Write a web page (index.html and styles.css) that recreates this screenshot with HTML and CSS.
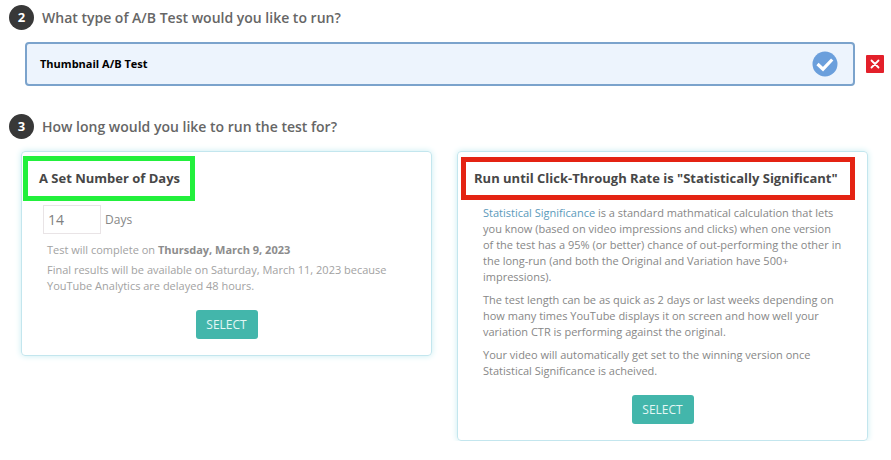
FILE: index.html
```html
<!DOCTYPE html>
<html lang="en">
<head>
<meta charset="utf-8">
<title>A/B Test Setup</title>
<link rel="stylesheet" href="styles.css">
</head>
<body>
<main>
  <section>
    <h2 class="step"><span class="num">2</span>What type of A/B Test would you like to run?</h2>
    <div class="type-row">
      <div class="type">
        <span>Thumbnail A/B Test</span>
        <svg class="check" viewBox="0 0 26 26" aria-hidden="true"><circle cx="13" cy="13" r="12.5" fill="#6b9fdc"/><path d="M5.500 13l5.500 5.200 9.200-9.700" fill="none" stroke="#fff" stroke-width="3.2"/></svg>
      </div>
      <button class="remove" type="button" aria-label="Remove">
        <svg viewBox="0 0 18 18" aria-hidden="true"><path d="M5.500 5.500l7 7M12.500 5.500l-7 7" stroke="#fff" stroke-width="1.8" stroke-linecap="round"/></svg>
      </button>
    </div>
  </section>
  <section>
    <h2 class="step"><span class="num">3</span>How long would you like to run the test for?</h2>
    <div class="cards">
      <article class="card">
        <h3 class="title green"><span>A Set Number of Days</span></h3>
        <div class="days">
          <input id="days" type="text" value="14">
          <label for="days">Days</label>
        </div>
        <div class="note">
          <p>Test will complete on <strong>Thursday, March 9, 2023</strong></p>
          <p>Final results will be available on Saturday, March 11, 2023 because YouTube Analytics are delayed 48 hours.</p>
        </div>
        <button class="select" type="button">SELECT</button>
      </article>
      <article class="card">
        <h3 class="title red"><span>Run until Click-Through Rate is "Statistically Significant"</span></h3>
        <div class="info">
          <p><a href="#">Statistical Significance</a> is a standard mathmatical calculation that lets you know (based on video impressions and clicks) when one version of the test has a 95% (or better) chance of out-performing the other in the long-run (and both the Original and Variation have 500+ impressions).</p>
          <p>The test length can be as quick as 2 days or last weeks depending on how many times YouTube displays it on screen and how well your variation CTR is performing against the original.</p>
          <p>Your video will automatically get set to the winning version once Statistical Significance is acheived.</p>
        </div>
        <button class="select" type="button">SELECT</button>
      </article>
    </div>
  </section>
</main>
</body>
</html>
```
FILE: styles.css
```css
* { box-sizing: border-box; }
body {
  margin: 0;
  background: #fff;
  color: #878787;
  font: 12px/16px "Open Sans", "Noto Sans", sans-serif;
}
h2, h3, p { margin: 0; }
main {
  display: grid;
  gap: 28px;
  padding: 5px 7px 0 9px;
}
.step {
  display: flex;
  align-items: center;
  gap: 8px;
  color: #666;
  font-size: 14px;
  line-height: 20px;
  font-weight: 600;
}
.num {
  width: 25px;
  height: 25px;
  border-radius: 50%;
  background: #383838;
  color: #fff;
  font-size: 13px;
  line-height: 25px;
  font-weight: 700;
  text-align: center;
}
.type-row {
  display: flex;
  align-items: center;
  gap: 11px;
  margin: 12px 0 0 16px;
}
.type {
  flex: 1;
  display: flex;
  align-items: center;
  justify-content: space-between;
  height: 44px;
  padding: 0 15px 0 13px;
  border: 2px solid #7ba3cc;
  border-radius: 4px;
  background: #edf4fd;
  color: #000;
  font-size: 11px;
  font-weight: 700;
}
.check { width: 26px; height: 26px; }
.remove {
  width: 18px;
  height: 18px;
  padding: 0;
  border: 0;
  border-radius: 1px;
  background: #e3202a;
}
.remove svg { display: block; }
.cards {
  display: grid;
  grid-template-columns: 1fr 1fr;
  align-items: start;
  gap: 25px;
  margin: 12px 16px 0 12px;
}
.card {
  display: flex;
  flex-direction: column;
  align-items: flex-start;
  padding: 4px 1px 16px;
  border: 1px solid #c3e6ee;
  border-radius: 4px;
  box-shadow: 0 0 6px #c8edf1;
}
.title {
  border: 5px solid;
  font-size: 13px;
  line-height: 19px;
  font-weight: 700;
  white-space: nowrap;
}
.title span { color: #474747; }
.green {
  padding: 8px 10px 8px 11px;
  border-color: #22f03c;
}
.red {
  margin: 1px 2px;
  padding: 7px 12px 7px 8px;
  border-color: #e42313;
}
.days {
  display: flex;
  align-items: center;
  gap: 4px;
  margin: 4px 20px 0;
}
.days input {
  width: 58px;
  height: 29px;
  padding: 0 4px;
  border: 1px solid #e9e4e6;
  background: #fff;
  color: #808080;
  font: 14px "Open Sans", "Noto Sans", sans-serif;
}
.note, .info { display: grid; }
.note {
  gap: 4px;
  margin: 8px 24px 16px;
  color: #a2a2a2;
  font-size: 11px;
}
.note strong { color: #8c8c8c; }
.info {
  gap: 7px;
  margin: 4px 24px 16px;
  font-size: 11px;
}
a { color: #5b9abb; text-decoration: none; }
.select {
  align-self: center;
  width: 62px;
  height: 29px;
  padding: 0;
  border: 0;
  border-radius: 3px;
  background: #43b6ab;
  color: #e4f7f5;
  font: 12px "Open Sans", "Noto Sans", sans-serif;
}
```
